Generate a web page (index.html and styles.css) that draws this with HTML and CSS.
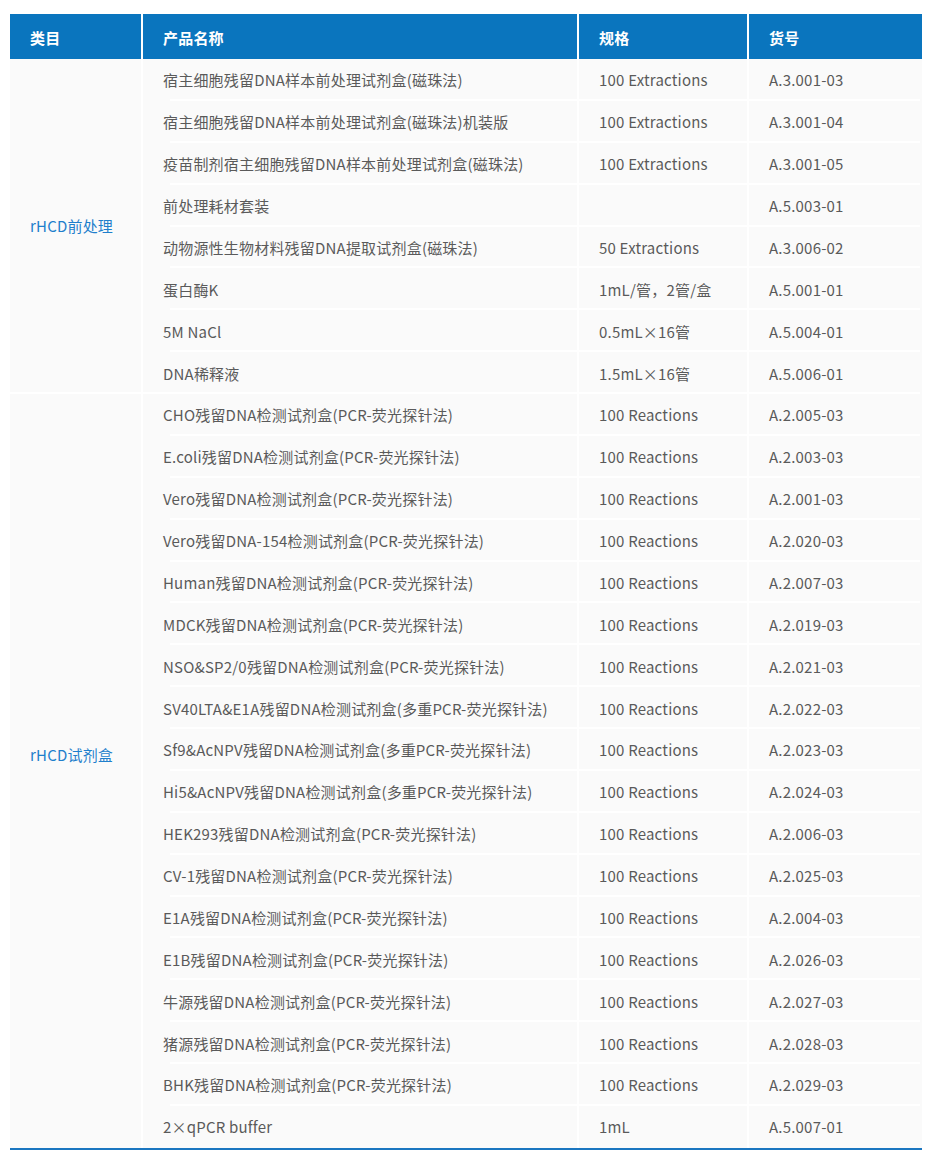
FILE: index.html
```html
<!DOCTYPE html>
<html lang="zh">
<head>
<meta charset="utf-8">
<title>产品列表</title>
<link rel="stylesheet" href="styles.css">
</head>
<body>
<div class="table">
  <div class="th">类目</div>
  <div class="th">产品名称</div>
  <div class="th">规格</div>
  <div class="th">货号</div>

  <div class="cat cat-1">rHCD前处理</div>
  <div class="cat cat-2">rHCD试剂盒</div>

  <div class="td name">宿主细胞残留DNA样本前处理试剂盒(磁珠法)</div><div class="td spec">100 Extractions</div><div class="td code">A.3.001-03</div>
  <div class="td name">宿主细胞残留DNA样本前处理试剂盒(磁珠法)机装版</div><div class="td spec">100 Extractions</div><div class="td code">A.3.001-04</div>
  <div class="td name">疫苗制剂宿主细胞残留DNA样本前处理试剂盒(磁珠法)</div><div class="td spec">100 Extractions</div><div class="td code">A.3.001-05</div>
  <div class="td name">前处理耗材套装</div><div class="td spec"></div><div class="td code">A.5.003-01</div>
  <div class="td name">动物源性生物材料残留DNA提取试剂盒(磁珠法)</div><div class="td spec">50 Extractions</div><div class="td code">A.3.006-02</div>
  <div class="td name">蛋白酶K</div><div class="td spec">1mL/管，2管/盒</div><div class="td code">A.5.001-01</div>
  <div class="td name">5M NaCl</div><div class="td spec">0.5mL×16管</div><div class="td code">A.5.004-01</div>
  <div class="td name name-full">DNA稀释液</div><div class="td spec">1.5mL×16管</div><div class="td code">A.5.006-01</div>

  <div class="td name">CHO残留DNA检测试剂盒(PCR-荧光探针法)</div><div class="td spec">100 Reactions</div><div class="td code">A.2.005-03</div>
  <div class="td name">E.coli残留DNA检测试剂盒(PCR-荧光探针法)</div><div class="td spec">100 Reactions</div><div class="td code">A.2.003-03</div>
  <div class="td name">Vero残留DNA检测试剂盒(PCR-荧光探针法)</div><div class="td spec">100 Reactions</div><div class="td code">A.2.001-03</div>
  <div class="td name">Vero残留DNA-154检测试剂盒(PCR-荧光探针法)</div><div class="td spec">100 Reactions</div><div class="td code">A.2.020-03</div>
  <div class="td name">Human残留DNA检测试剂盒(PCR-荧光探针法)</div><div class="td spec">100 Reactions</div><div class="td code">A.2.007-03</div>
  <div class="td name">MDCK残留DNA检测试剂盒(PCR-荧光探针法)</div><div class="td spec">100 Reactions</div><div class="td code">A.2.019-03</div>
  <div class="td name">NSO&amp;SP2/0残留DNA检测试剂盒(PCR-荧光探针法)</div><div class="td spec">100 Reactions</div><div class="td code">A.2.021-03</div>
  <div class="td name">SV40LTA&amp;E1A残留DNA检测试剂盒(多重PCR-荧光探针法)</div><div class="td spec">100 Reactions</div><div class="td code">A.2.022-03</div>
  <div class="td name">Sf9&amp;AcNPV残留DNA检测试剂盒(多重PCR-荧光探针法)</div><div class="td spec">100 Reactions</div><div class="td code">A.2.023-03</div>
  <div class="td name">Hi5&amp;AcNPV残留DNA检测试剂盒(多重PCR-荧光探针法)</div><div class="td spec">100 Reactions</div><div class="td code">A.2.024-03</div>
  <div class="td name">HEK293残留DNA检测试剂盒(PCR-荧光探针法)</div><div class="td spec">100 Reactions</div><div class="td code">A.2.006-03</div>
  <div class="td name">CV-1残留DNA检测试剂盒(PCR-荧光探针法)</div><div class="td spec">100 Reactions</div><div class="td code">A.2.025-03</div>
  <div class="td name">E1A残留DNA检测试剂盒(PCR-荧光探针法)</div><div class="td spec">100 Reactions</div><div class="td code">A.2.004-03</div>
  <div class="td name">E1B残留DNA检测试剂盒(PCR-荧光探针法)</div><div class="td spec">100 Reactions</div><div class="td code">A.2.026-03</div>
  <div class="td name">牛源残留DNA检测试剂盒(PCR-荧光探针法)</div><div class="td spec">100 Reactions</div><div class="td code">A.2.027-03</div>
  <div class="td name">猪源残留DNA检测试剂盒(PCR-荧光探针法)</div><div class="td spec">100 Reactions</div><div class="td code">A.2.028-03</div>
  <div class="td name">BHK残留DNA检测试剂盒(PCR-荧光探针法)</div><div class="td spec">100 Reactions</div><div class="td code">A.2.029-03</div>
  <div class="td name last">2×qPCR buffer</div><div class="td spec last">1mL</div><div class="td code last">A.5.007-01</div>
</div>
</body>
</html>
```

FILE: styles.css
```css
html, body {
  margin: 0;
  padding: 0;
  background: #ffffff;
}

body {
  font-family: "Noto Sans CJK SC", "Noto Sans", sans-serif;
  font-size: 15px;
  color: #5a5a5a;
  letter-spacing: 0.2px;
}

.table {
  display: grid;
  grid-template-columns: 131px 434px 168px 173px;
  grid-template-rows: 45px repeat(26, 41.88px);
  column-gap: 2px;
  width: 912px;
  margin: 14px 0 0 10px;
  background: #ffffff;
  border-bottom: 2px solid #1a76c0;
}

.th {
  background: #0a75be;
  color: #ffffff;
  font-weight: bold;
  display: flex;
  align-items: center;
  padding: 2px 0 0 20px;
  box-sizing: border-box;
}

.cat {
  grid-column: 1;
  background: #fafafa;
  color: #1f7fcc;
  display: flex;
  align-items: center;
  padding-left: 20px;
  box-sizing: border-box;
}

.cat-1 {
  grid-row: 2 / span 8;
  border-bottom: 2px solid #ffffff;
}

.cat-2 {
  grid-row: 10 / span 18;
  padding-bottom: 32px;
}

.td {
  display: flex;
  align-items: center;
  padding-left: 20px;
  box-sizing: border-box;
  white-space: nowrap;
  background: #fafafa;
}

.td.spec {
  background: linear-gradient(#ffffff, #ffffff) no-repeat left bottom / 100% 2px, #fafafa;
}

.td.code {
  background: linear-gradient(#ffffff, #ffffff) no-repeat left bottom / calc(100% - 2px) 2px, #fafafa;
}

.td.name {
  background: linear-gradient(#ffffff, #ffffff) no-repeat right bottom / calc(100% - 27px) 2px, #fafafa;
}

.td.name.name-full {
  background: linear-gradient(#ffffff, #ffffff) no-repeat left bottom / 100% 2px, #fafafa;
}

.td.last {
  background: #fafafa;
}
```
